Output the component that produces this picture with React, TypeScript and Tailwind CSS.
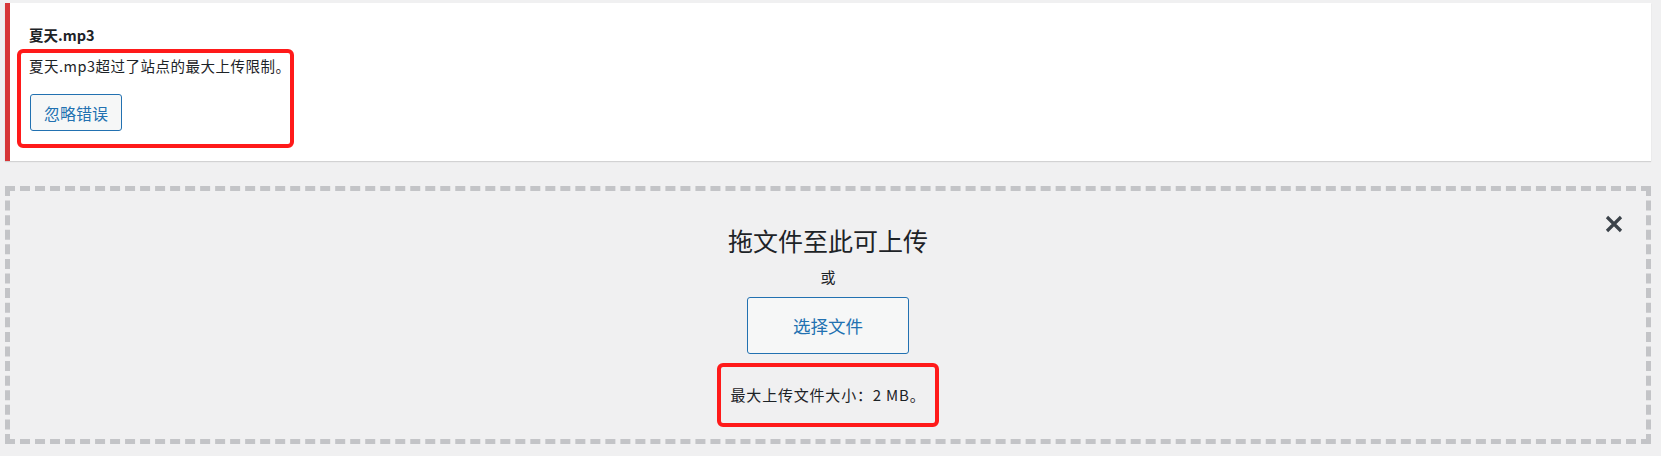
import React from "react";

const font = { fontFamily: '"Noto Sans CJK SC", "Noto Sans", sans-serif' };

export default function App() {
  return (
    <div
      className="w-[1661px] h-[456px] bg-[#f0f0f1] pl-[5px] pr-[10px] pt-[3px] text-[#1d2327] overflow-hidden"
      style={font}
    >
      {/* Error notice card */}
      <div className="relative h-[158px] bg-white border-l-[5px] border-[#d63638] shadow-[0_1px_1px_rgba(0,0,0,0.12)] pl-[19px] pt-[21px]">
        <div className="text-[14.5px] leading-[22px] font-semibold">夏天.mp3</div>
        <div className="mt-[9px] text-[14.5px] leading-[22px] tracking-[0.5px]">夏天.mp3超过了站点的最大上传限制。</div>
        <button className="mt-[17px] ml-[1px] w-[92px] h-[37px] border border-[#2271b1] rounded-[3px] bg-[#f6f7f7] text-[#2271b1] text-[16px] leading-none">
          忽略错误
        </button>
        <div className="pointer-events-none absolute left-[7px] top-[46px] w-[277px] h-[99px] border-[4px] border-[#ff1a1a] rounded-[6px]" />
      </div>

      {/* Drop zone */}
      <div className="relative mt-[25px] h-[258px] border-[5px] border-dashed border-[#c3c4c7] flex flex-col items-center">
        <div className="mt-[31px] text-[25px] leading-[36px]">拖文件至此可上传</div>
        <div className="mt-[8px] text-[15px] leading-[22px]">或</div>
        <button className="mt-[9px] w-[162px] h-[57px] border border-[#2271b1] rounded-[3px] bg-[#f6f7f7] text-[#2271b1] text-[17.5px] leading-none">
          选择文件
        </button>
        <div className="mt-[9px] w-[222px] h-[64px] border-[4px] border-[#ff1a1a] rounded-[6px] flex items-center justify-center text-[15px] leading-[22px] tracking-[0.8px]">
          最大上传文件大小：2 MB。
        </div>
        <svg
          className="absolute right-[23px] top-[24px]"
          width="18"
          height="18"
          viewBox="0 0 18 18"
        >
          <path d="M2 2 L16 16 M16 2 L2 16" stroke="#3c434a" strokeWidth="3.2" strokeLinecap="butt" />
        </svg>
      </div>
    </div>
  );
}
